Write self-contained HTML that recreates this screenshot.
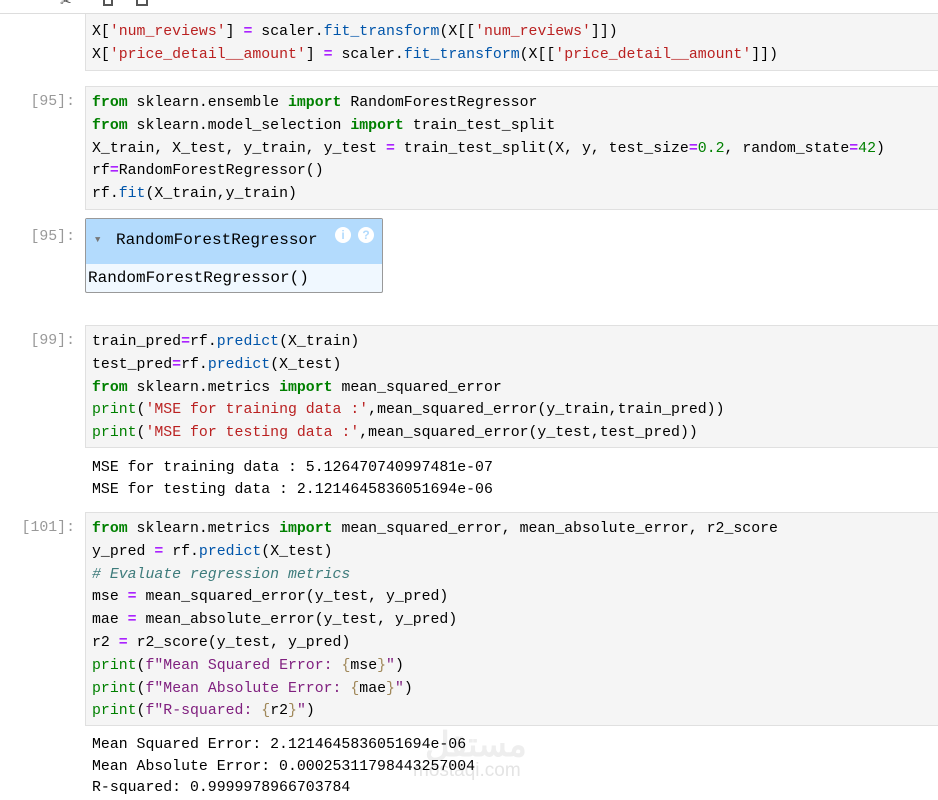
<!DOCTYPE html>
<html><head><style>
body{margin:0;width:938px;height:799px;overflow:hidden;background:#fff;position:relative;font-family:"Liberation Mono",monospace;}
.top{position:absolute;left:0;top:0;width:938px;height:13px;background:#fff;border-bottom:1px solid #ddd;z-index:5;}
.cell{position:absolute;left:85px;width:860px;background:#f5f5f5;border:1px solid #e0e0e0;box-sizing:border-box;}
pre{margin:0;position:absolute;left:92px;font-family:"Liberation Mono",monospace;font-size:14.85px;line-height:22.8px;color:#000;white-space:pre;}
.p{position:absolute;right:863px;font-size:14.85px;color:#999;font-family:"Liberation Mono",monospace;}
.k{color:#008000;font-weight:bold}.s{color:#ba2121}.o{color:#aa22ff;font-weight:bold}.f{color:#0055aa}.n{color:#008000}.c{color:#3d7b7b;font-style:italic}.b{color:#008000}.fs{color:#80207f}.br{color:#a0885a}
.w{position:absolute;left:85px;top:218px;width:298px;height:75px;border:1px solid #999;box-sizing:border-box;border-radius:2px;background:#f0f8ff;}
.wh{height:45px;background:#b3dbfd;position:relative;}
</style></head><body>
<div class="top"><span style="position:absolute;left:60px;top:-6px;font-size:14px;color:#555">✂</span><span style="position:absolute;left:103px;top:-8px;width:10px;height:14px;border:2px solid #555;box-sizing:border-box"></span><span style="position:absolute;left:136px;top:-8px;width:12px;height:14px;border:2px solid #555;box-sizing:border-box"></span></div>
<div class="cell" style="top:-10px;height:81px"></div>
<pre style="top:21px">X[<span class="s">'num_reviews'</span>] <span class="o">=</span> scaler.<span class="f">fit_transform</span>(X[[<span class="s">'num_reviews'</span>]])
X[<span class="s">'price_detail__amount'</span>] <span class="o">=</span> scaler.<span class="f">fit_transform</span>(X[[<span class="s">'price_detail__amount'</span>]])</pre>

<div class="p" style="top:94px">[95]:</div>
<div class="cell" style="top:86px;height:124px"></div>
<pre style="top:92px"><span class="k">from</span> sklearn.ensemble <span class="k">import</span> RandomForestRegressor
<span class="k">from</span> sklearn.model_selection <span class="k">import</span> train_test_split
X_train, X_test, y_train, y_test <span class="o">=</span> train_test_split(X, y, test_size<span class="o">=</span><span class="n">0.2</span>, random_state<span class="o">=</span><span class="n">42</span>)
rf<span class="o">=</span>RandomForestRegressor()
rf.<span class="f">fit</span>(X_train,y_train)</pre>

<div class="p" style="top:229px">[95]:</div>
<div class="w"><div class="wh"><span style="position:absolute;left:9px;top:16px;font-size:9px;color:#777">▼</span><span style="position:absolute;left:30px;top:12px;font-size:16px;font-family:'Liberation Mono',monospace;">RandomForestRegressor</span><span style="position:absolute;left:249px;top:8px;width:16px;height:16px;border-radius:50%;background:#fff;color:#b3dbfd;font-size:12px;text-align:center;line-height:16px;font-weight:bold;font-family:'Liberation Sans',sans-serif">i</span><span style="position:absolute;left:272px;top:8px;width:16px;height:16px;border-radius:50%;background:#fff;color:#b3dbfd;font-size:12px;text-align:center;line-height:16px;font-weight:bold;font-family:'Liberation Sans',sans-serif">?</span></div>
<div style="position:absolute;left:2px;top:50px;font-size:16px;font-family:'Liberation Mono',monospace;">RandomForestRegressor()</div></div>

<div class="p" style="top:333px">[99]:</div>
<div class="cell" style="top:325px;height:123px"></div>
<pre style="top:331px">train_pred<span class="o">=</span>rf.<span class="f">predict</span>(X_train)
test_pred<span class="o">=</span>rf.<span class="f">predict</span>(X_test)
<span class="k">from</span> sklearn.metrics <span class="k">import</span> mean_squared_error
<span class="b">print</span>(<span class="s">'MSE for training data :'</span>,mean_squared_error(y_train,train_pred))
<span class="b">print</span>(<span class="s">'MSE for testing data :'</span>,mean_squared_error(y_test,test_pred))</pre>
<pre style="top:457px;line-height:22px">MSE for training data : 5.126470740997481e-07
MSE for testing data : 2.1214645836051694e-06</pre>

<div class="p" style="top:520px">[101]:</div>
<div class="cell" style="top:512px;height:214px"></div>
<pre style="top:518px"><span class="k">from</span> sklearn.metrics <span class="k">import</span> mean_squared_error, mean_absolute_error, r2_score
y_pred <span class="o">=</span> rf.<span class="f">predict</span>(X_test)
<span class="c"># Evaluate regression metrics</span>
mse <span class="o">=</span> mean_squared_error(y_test, y_pred)
mae <span class="o">=</span> mean_absolute_error(y_test, y_pred)
r2 <span class="o">=</span> r2_score(y_test, y_pred)
<span class="b">print</span>(<span class="fs">f"Mean Squared Error: </span><span class="br">{</span>mse<span class="br">}</span><span class="fs">"</span>)
<span class="b">print</span>(<span class="fs">f"Mean Absolute Error: </span><span class="br">{</span>mae<span class="br">}</span><span class="fs">"</span>)
<span class="b">print</span>(<span class="fs">f"R-squared: </span><span class="br">{</span>r2<span class="br">}</span><span class="fs">"</span>)</pre>
<div style="position:absolute;left:425px;top:725px;font-family:'Liberation Sans',sans-serif;font-size:34px;font-weight:bold;color:#eee;">مستقل</div>
<div style="position:absolute;left:413px;top:760px;font-family:'Liberation Sans',sans-serif;font-size:19px;color:#e4e4e4;">mostaqi.com</div>
<pre style="top:735px;line-height:21.5px">Mean Squared Error: 2.1214645836051694e-06
Mean Absolute Error: 0.00025311798443257004
R-squared: 0.9999978966703784</pre>
</body></html>
